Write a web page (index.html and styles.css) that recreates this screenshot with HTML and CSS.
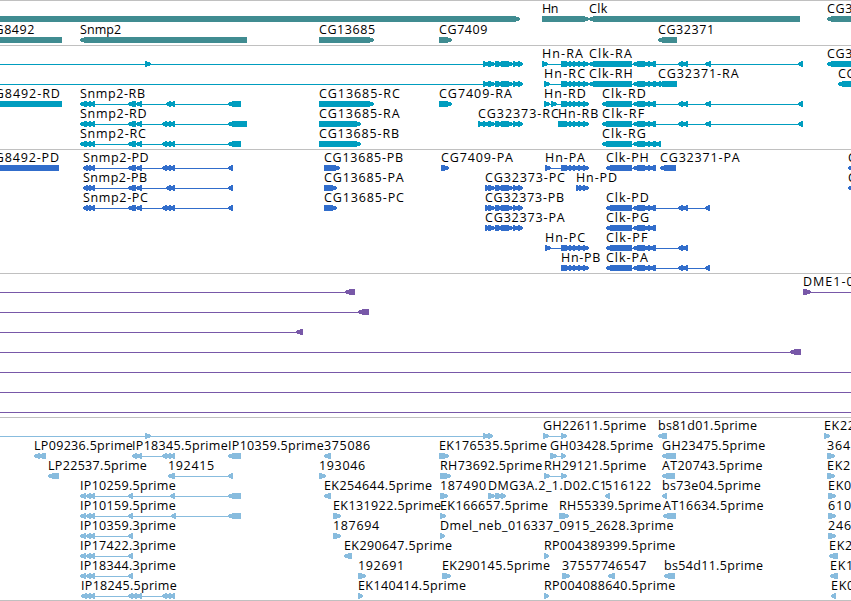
FILE: index.html
```
<!DOCTYPE html>
<html lang="en">
  <head>
    <meta charset="UTF-8" />
    <meta name="viewport" content="width=device-width, initial-scale=1.0" />
    <title>Genome Browser</title>
    <link rel="stylesheet" href="styles.css">
  </head>
  <body>
    <main class="browser">
      <section class="track genes" id="genes"></section>
      <section class="track transcripts" id="transcripts"></section>
      <section class="track proteins" id="proteins"></section>
      <section class="track contigs" id="contigs"></section>
      <section class="track ests" id="ests"></section>
    </main>
    <script src="tracks.js"></script>
  </body>
</html>
```

FILE: styles.css
```
body {
  margin: 0;
  background: #ffffff;
  overflow: hidden;
}

.browser {
  display: flex;
  flex-direction: column;
  width: 851px;
  height: 600px;
  border-bottom: 1px solid #c0c0c0;
}

.track {
  box-sizing: border-box;
  border-top: 1px solid #c0c0c0;
  overflow: hidden;
}

.track svg {
  display: block;
  width: 851px;
  height: 100%;
}

.genes {
  height: 45px;
  color: #408c91;
}

.transcripts {
  height: 104px;
  color: #009dbf;
}

.proteins {
  height: 124px;
  color: #316dcb;
}

.contigs {
  height: 144px;
  color: #7858a8;
}

.ests {
  height: 183px;
  color: #88bcde;
}

.label {
  font-family: "Open Sans", "DejaVu Sans", sans-serif;
  font-size: 12.5px;
  fill: #000000;
}

.exon,
.intron {
  fill: currentColor;
  shape-rendering: crispEdges;
}
```

FILE: tracks.js
```
// feature: [row, label, strand, exons, intronStart, intronEnd]
const hn = [[561, 571], [569, 575], [573, 579], [578, 584], [583, 589]];
const cg32373 = [[488, 495], [495, 499], [497, 502], [501, 513], [513, 519], [518, 523]];
const clk = [[633, 645], [644, 650], [649, 656]];
const clkMid = [[678, 683], [682, 688]];
const snmpEnd = [[86, 91], [90, 95]];
const snmpMid = [[128, 136], [136, 142]];
const two = [[166, 171], [170, 175]];
const three = [[162, 167], [166, 171], [170, 175]];

const tracks = {
  genes: {
    top: 15,
    pitch: 21,
    features: [
      [0, "", "+", [[-10, 520]]],
      [0, "Hn", "+", [[542, 589]]],
      [0, "Clk", "-", [[589, 800]]],
      [0, "CG3", "-", [[827, 870]]],
      [1, "CG8492", "-", [[-14, 62]]],
      [1, "Snmp2", "-", [[80, 247]]],
      [1, "CG13685", "+", [[319, 374]]],
      [1, "CG7409", "+", [[439, 452]]],
      [1, "CG32371", "-", [[658, 677]]],
    ],
  },
  transcripts: {
    top: 15,
    pitch: 20,
    features: [
      [0, "", "+", [[145, 151], [483, 489], ...cg32373], -10, 523],
      [0, "Hn-RA", "+", [[542, 548], ...hn]],
      [0, "Clk-RA", "-", [[589, 632], ...clk, ...clkMid, [705, 711], [798, 803]]],
      [0, "CG3", "-", [[827, 870]]],
      [1, "", "+", [[483, 489], ...cg32373], -10, 523],
      [1, "Hn-RC", "+", [[544, 550], ...hn]],
      [1, "Clk-RH", "-", [[589, 632], ...clk, [655, 661]]],
      [1, "CG32371-RA", "-", [[658, 677]]],
      [1, "CG", "-", [[838, 870]]],
      [2, "CG8492-RD", "-", [[-14, 62]]],
      [2, "Snmp2-RB", "-", [[80, 87], ...snmpEnd, ...snmpMid, ...two, [228, 241]]],
      [2, "CG13685-RC", "+", [[319, 374]]],
      [2, "CG7409-RA", "+", [[439, 452]]],
      [2, "Hn-RD", "+", [[544, 550], [551, 557], ...hn]],
      [2, "Clk-RD", "-", [[602, 632], ...clk, ...clkMid, [705, 711], [798, 803]]],
      [3, "Snmp2-RD", "-", [[80, 87], ...snmpEnd, ...snmpMid, ...three, [228, 247]]],
      [3, "CG13685-RA", "+", [[319, 361]]],
      [3, "CG32373-RC", "+", [[478, 484], [483, 489], ...cg32373]],
      [3, "Hn-RB", "+", [[558, 571], ...hn]],
      [3, "Clk-RF", "-", [[602, 632], ...clk, ...clkMid, [705, 711], [798, 803]]],
      [4, "Snmp2-RC", "-", [[80, 87], ...snmpEnd, ...snmpMid, ...three, [228, 241]]],
      [4, "CG13685-RB", "+", [[319, 361]]],
      [4, "Clk-RG", "-", [[602, 632], ...clk, [655, 661]]],
    ],
  },
  proteins: {
    top: 15,
    pitch: 20,
    features: [
      [0, "CG8492-PD", "-", [[-14, 59]]],
      [0, "Snmp2-PD", "-", [[83, 88], ...snmpEnd, ...snmpMid, ...three, [228, 233]]],
      [0, "CG13685-PB", "+", [[324, 340]]],
      [0, "CG7409-PA", "+", [[441, 449]]],
      [0, "Hn-PA", "+", [[545, 551], ...hn]],
      [0, "Clk-PH", "-", [[606, 632], ...clk]],
      [0, "CG32371-PA", "-", [[660, 676]]],
      [0, "C", "-", [[848, 870]]],
      [1, "Snmp2-PB", "-", [[83, 88], ...snmpEnd, ...snmpMid, ...two, [228, 233]]],
      [1, "CG13685-PA", "+", [[324, 337]]],
      [1, "CG32373-PC", "+", [[485, 490], ...cg32373]],
      [1, "Hn-PD", "+", [[576, 581], [579, 584], [583, 589]]],
      [1, "C", "-", [[848, 870]]],
      [2, "Snmp2-PC", "-", [[83, 88], ...snmpEnd, ...snmpMid, ...three, [228, 233]]],
      [2, "CG13685-PC", "+", [[324, 337]]],
      [2, "CG32373-PB", "+", [[485, 490], ...cg32373]],
      [2, "Clk-PD", "-", [[606, 632], ...clk, ...clkMid, [705, 710]]],
      [3, "CG32373-PA", "+", [[485, 490], ...cg32373]],
      [3, "Clk-PG", "-", [[606, 632], ...clk]],
      [4, "Hn-PC", "+", [[545, 551], ...hn]],
      [4, "Clk-PF", "-", [[606, 632], ...clk, ...clkMid]],
      [5, "Hn-PB", "+", hn],
      [5, "Clk-PA", "-", [[606, 632], ...clk, ...clkMid, [705, 710]]],
    ],
  },
  contigs: {
    top: 15,
    pitch: 20,
    features: [
      [0, "", "-", [[345, 355]], -10, 355],
      [0, "DME1-0", "+", [[803, 811]], 803, 870],
      [1, "", "-", [[358, 369]], -10, 369],
      [2, "", "-", [[296, 303]], -10, 303],
      [3, "", "-", [[790, 801]], -10, 801],
      [4, "", "-", [], -10, 870],
      [5, "", "-", [], -10, 870],
      [6, "", "-", [], -10, 870],
    ],
  },
  ests: {
    top: 15,
    pitch: 20,
    features: [
      [0, "", "+", [[145, 151], [483, 489], [488, 493]], -10, 493],
      [0, "GH22611.5prime", "+", [[543, 549], [561, 567]]],
      [0, "bs81d01.5prime", "-", [[658, 667]]],
      [0, "EK22", "+", [[824, 830]]],
      [1, "LP09236.5prime", "-", [[34, 40], [38, 46]]],
      [1, "IP18345.5prime", "-", [[132, 137], [136, 142], ...three]],
      [1, "IP10359.5prime", "-", [[228, 241]]],
      [1, "375086", "-", [[324, 331]]],
      [1, "EK176535.5prime", "+", [[439, 449]]],
      [1, "GH03428.5prime", "+", [[550, 557], [561, 566]]],
      [1, "GH23475.5prime", "-", [[662, 676]]],
      [1, "364", "+", [[827, 835]]],
      [2, "LP22537.5prime", "-", [[48, 59]]],
      [2, "192415", "-", [[168, 175], [228, 233]]],
      [2, "193046", "+", [[319, 326]]],
      [2, "RH73692.5prime", "+", [[440, 451]]],
      [2, "RH29121.5prime", "+", [[544, 550], [561, 567]]],
      [2, "AT20743.5prime", "-", [[662, 675]]],
      [2, "EK2", "+", [[827, 835]]],
      [3, "IP10259.5prime", "-", [[80, 86], ...snmpEnd, [128, 133], [170, 175], [228, 241]]],
      [3, "EK254644.5prime", "-", [[324, 331]]],
      [3, "187490", "+", [[440, 448]]],
      [3, "DMG3A.2_1.D02.C1", "+", [[488, 495], [495, 499], [497, 502], [501, 506]]],
      [3, "516122", "-", [[605, 610]]],
      [3, "bs73e04.5prime", "-", [[662, 667]]],
      [3, "EK0", "+", [[828, 836]]],
      [4, "IP10159.5prime", "-", [[80, 86], ...snmpEnd, [128, 133], [171, 176], [228, 241]]],
      [4, "EK131922.5prime", "+", [[333, 341]]],
      [4, "EK166657.5prime", "+", [[440, 446]]],
      [4, "RH55339.5prime", "+", [[559, 569]]],
      [4, "AT16634.5prime", "-", [[663, 676]]],
      [4, "610", "+", [[828, 836]]],
      [5, "IP10359.3prime", "-", [[80, 86], ...snmpEnd, [128, 133]]],
      [5, "187694", "+", [[333, 341]]],
      [5, "Dmel_neb_016337_0915_2628.3prime", "+", [[440, 445]]],
      [5, "246", "+", [[828, 836]]],
      [6, "IP17422.3prime", "-", [[80, 86], ...snmpEnd, [128, 133]]],
      [6, "EK290647.5prime", "-", [[344, 352]]],
      [6, "RP004389399.5prime", "+", [[544, 549]]],
      [6, "EK2", "-", [[829, 838]]],
      [7, "IP18344.3prime", "-", [[80, 86], ...snmpEnd, [128, 133]]],
      [7, "192691", "+", [[358, 366]]],
      [7, "EK290145.5prime", "+", [[442, 451]]],
      [7, "375577", "+", [[562, 570]]],
      [7, "46547", "-", [[608, 615]]],
      [7, "bs54d11.5prime", "-", [[664, 675]]],
      [7, "EK1", "-", [[830, 838]]],
      [8, "IP18245.5prime", "-", [[81, 87], ...snmpEnd, [128, 133], [132, 137], [136, 142], ...three]],
      [8, "EK140414.5prime", "+", [[358, 363]]],
      [8, "RP004088640.5prime", "+", [[544, 549]]],
      [8, "EK0", "-", [[831, 836]]],
    ],
  },
};

// label advances, anything missing is as wide as a digit
const advance = {
  "-": 8, ".": 3.9, _: 6.4, A: 8.2, B: 7.6, C: 8.4, D: 9.2, E: 7.6, G: 9.3,
  H: 9.1, I: 3.5, K: 7.9, L: 6.7, M: 10.4, P: 7.3, R: 8.2, S: 7.2, T: 7.4,
  e: 7.4, i: 3.4, k: 6.6, l: 3.4, m: 11.2, n: 7.4, r: 5.1, s: 6.4,
};

function labelWidth(label) {
  return [...label].reduce((sum, c) => sum + (advance[c] || 7.7), 0).toFixed(1);
}

function exonPoints(a, b, strand, y) {
  const tip = Math.min(5, b - a - 1);
  if (strand === "+") {
    return `${a},${y} ${b - tip},${y} ${b},${y + 2} ${b},${y + 4} ${b - tip},${y + 6} ${a},${y + 6}`;
  }
  return `${b},${y} ${a + tip},${y} ${a},${y + 2} ${a},${y + 4} ${a + tip},${y + 6} ${b},${y + 6}`;
}

function drawTrack(track) {
  let out = "";
  track.features.forEach(([row, label, strand, exons, from, to]) => {
    const y = track.top + row * track.pitch;
    const start = from ?? exons[0][0];
    const end = to ?? exons[exons.length - 1][1];
    if (exons.length !== 1 || from !== undefined) {
      out += `<rect class="intron" x="${start}" y="${y + 3}" width="${end - start}" height="1"/>`;
    }
    exons.forEach(([a, b]) => {
      out += `<polygon class="exon" points="${exonPoints(a, b, strand, y)}"/>`;
    });
    if (label) {
      out += `<text class="label" x="${start}" y="${y - 3}" textLength="${labelWidth(label)}">${label}</text>`;
    }
  });
  return `<svg>${out}</svg>`;
}

Object.keys(tracks).forEach((id) => {
  document.getElementById(id).innerHTML = drawTrack(tracks[id]);
});
```
